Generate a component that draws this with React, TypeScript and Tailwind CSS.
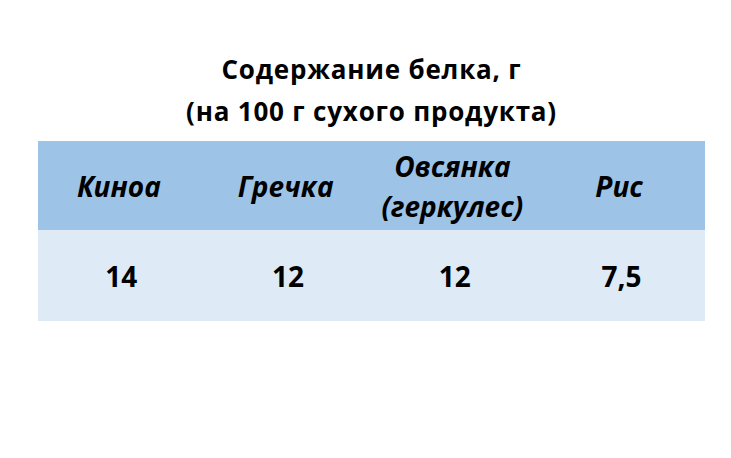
const headers = [["Киноа"], ["Гречка"], ["Овсянка", "(геркулес)"], ["Рис"]];
const values = ["14", "12", "12", "7,5"];

export default function App() {
  return (
    <div
      className="w-[731px] h-[458px] bg-white text-black"
      style={{ fontFamily: '"Open Sans", "Noto Sans", sans-serif' }}
    >
      <div className="ml-[38px] w-[667px] pt-[48px]">
        <h1 className="text-center text-[26px] font-bold leading-[42px] tracking-[0.8px]">
          Содержание белка, г
          <br />
          (на 100 г сухого продукта)
        </h1>
        <div className="mt-[9px] grid grid-cols-4">
          {headers.map((lines, i) => (
            <div
              key={i}
              className="flex h-[89px] flex-col items-center justify-center bg-[#9dc3e6] pr-[5px] text-[28px] font-bold italic leading-[40px]"
            >
              {lines.map((l) => (
                <span key={l}>{l}</span>
              ))}
            </div>
          ))}
          {values.map((v, i) => (
            <div
              key={i}
              className="flex h-[91px] items-center justify-center bg-[#deeaf6] text-[28px] font-bold leading-[40px]"
            >
              {v}
            </div>
          ))}
        </div>
      </div>
    </div>
  );
}
